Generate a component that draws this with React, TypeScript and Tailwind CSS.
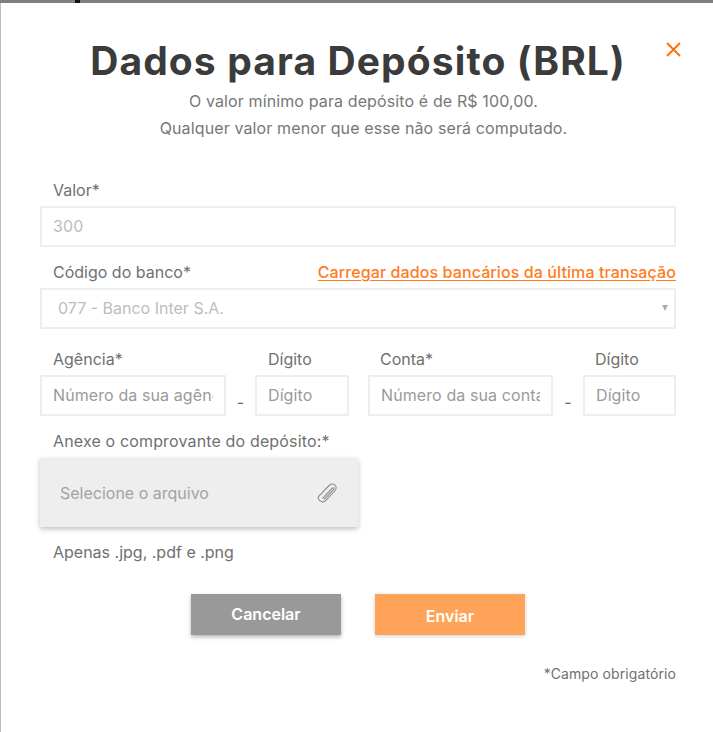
import * as React from 'react';

const fieldClass =
  'h-[41px] w-full border-2 border-[#eeeeee] bg-white px-[11px] pb-[2px] text-[16px] tracking-[0.1px] text-[#999] outline-none placeholder:text-[#9a9a9a]';
const labelClass = 'block pl-[13px] text-[16px] leading-[20px] text-[#707070]';

function PaperclipIcon(): React.JSX.Element {
  return (
    <svg width="22" height="20" viewBox="0 0 22 20" fill="none" stroke="#8c8c8c" strokeWidth="1.1" strokeLinejoin="round" strokeLinecap="round">
      <path d="M1.4 13.6 11.6 3c1.9-2 4.4-2.500 6.200-1.100 1.900 1.500 1.800 4-.1 6.100L9.400 16.800c-2 2.100-4.700 2.500-6.400 1.100-1.700-1.300-2-3-1.600-4.300Z" />
      <path d="M5.800 15.200 14.800 5.600c.7-.7 1.300-1 1.800-.6.500.4.300 1.100-.4 1.800L7.400 16.200" />
    </svg>
  );
}

export default function App(): React.JSX.Element {
  return (
    <div className="flex h-[732px] w-[713px] flex-col overflow-hidden bg-white font-['Inter','Liberation_Sans',sans-serif]">
      <div className="h-[3px] shrink-0 bg-[#808080] pl-[75px]">
        <div className="h-[3px] w-[5px] bg-[#111]" />
      </div>
      <div className="relative flex-1 border-l border-[#bdbdbd] pl-[39px] pr-[37px]">
        <button type="button" aria-label="Fechar" className="absolute right-[32px] top-[39px] text-[#ff6d00]">
          <svg width="15" height="15" viewBox="0 0 15 15" fill="none" stroke="currentColor" strokeWidth="1.8">
            <path d="M1 1l13 13M14 1 1 14" />
          </svg>
        </button>

        <h1 className="mt-[33px] text-center text-[39px] font-bold leading-[50px] tracking-[1.1px] text-[#3b3b3b]">
          Dados para Depósito (BRL)
        </h1>
        <p className="mt-[2px] pl-[11px] text-center text-[16px] leading-[27px] tracking-[0.12px] text-[#777777]">
          O valor mínimo para depósito é de R$ 100,00.
          <br />
          Qualquer valor menor que esse não será computado.
        </p>

        <label className={`${labelClass} mt-[38px]`}>Valor*</label>
        <input className={`${fieldClass} mt-[6px] placeholder:text-[#bdbdbd]`} placeholder="300" />

        <div className="mt-[15px] flex items-center justify-between">
          <label className={labelClass}>Código do banco*</label>
          <a href="#" className="text-[16px] font-medium leading-[20px] tracking-[0.1px] text-[#ff7b1c] underline underline-offset-2">
            Carregar dados bancários da última transação
          </a>
        </div>
        <div className="mt-[6px] flex h-[41px] items-center justify-between border-2 border-[#eeeeee] pb-[2px] pl-[16px] pr-[6px] text-[16px] text-[#bdbdbd]">
          <span>077 - Banco Inter S.A.</span>
          <svg width="6" height="6" viewBox="0 0 6 6" fill="#aaaaaa">
            <path d="M0 0h6L3 6Z" />
          </svg>
        </div>

        <div className="mt-[20px] flex">
          <div className="w-[186px]">
            <label className={labelClass}>Agência*</label>
            <input className={`${fieldClass} mt-[6px]`} placeholder="Número da sua agência" />
          </div>
          <span className="w-[29px] self-end pb-[2px] text-center text-[16px] text-[#6b6b6b]">-</span>
          <div className="w-[94px]">
            <label className={labelClass}>Dígito</label>
            <input className={`${fieldClass} mt-[6px]`} placeholder="Dígito" />
          </div>
          <div className="ml-[19px] w-[185px]">
            <label className={`${labelClass} -ml-px`}>Conta*</label>
            <input className={`${fieldClass} mt-[6px]`} placeholder="Número da sua conta" />
          </div>
          <span className="w-[30px] self-end pb-[2px] text-center text-[16px] text-[#6b6b6b]">-</span>
          <div className="w-[93px]">
            <label className={`${labelClass} -ml-px`}>Dígito</label>
            <input className={`${fieldClass} mt-[6px]`} placeholder="Dígito" />
          </div>
        </div>

        <label className={`${labelClass} mt-[15px] tracking-[0.15px]`}>Anexe o comprovante do depósito:*</label>
        <div className="mt-[7px] flex h-[69px] w-[318px] items-center justify-between bg-[#eeeeee] pl-[20px] pr-[19px] text-[16px] text-[#a3a3a3] shadow-[0_2px_5px_rgba(0,0,0,0.25)]">
          <span>Selecione o arquivo</span>
          <PaperclipIcon />
        </div>
        <p className={`${labelClass} mt-[15px]`}>Apenas .jpg, .pdf e .png</p>

        <div className="mt-[32px] flex gap-[34px] pl-[151px]">
          <button type="button" className="h-[41px] w-[150px] bg-[#999999] pb-[2px] text-[16px] font-semibold text-white shadow-[0_2px_4px_rgba(0,0,0,0.3)]">
            Cancelar
          </button>
          <button type="button" className="h-[41px] w-[150px] bg-[#ffa359] pt-[3px] text-[16px] font-semibold text-white shadow-[0_1px_4px_rgba(0,0,0,0.2)]">
            Enviar
          </button>
        </div>

        <p className="mt-[29px] text-right text-[14px] leading-[20px] tracking-[0.1px] text-[#707070]">*Campo obrigatório</p>
      </div>
    </div>
  );
}
